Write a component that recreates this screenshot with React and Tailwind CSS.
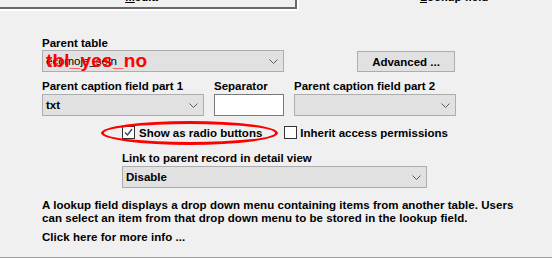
import React from 'react';

const font = { fontFamily: '"Liberation Sans", Arial, sans-serif' };

function Chevron() {
  return (
    <svg width="9" height="5" viewBox="0 0 9 5" className="shrink-0">
      <path d="M0.5 0.5 L4.5 4.5 L8.5 0.5" fill="none" stroke="#5a5a5a" strokeWidth="1" />
    </svg>
  );
}

function Select({ value, className = '' }) {
  return (
    <div className={`h-[22px] bg-[#e1e1e1] border border-[#adadad] flex items-center justify-between pl-[3px] pr-[5px] ${className}`}>
      <span>{value}</span>
      <Chevron />
    </div>
  );
}

function Checkbox({ checked }) {
  return (
    <div className="w-[13px] h-[13px] bg-white border border-[#333] flex items-center justify-center shrink-0">
      {checked && (
        <svg width="11" height="11" viewBox="0 0 11 11">
          <path d="M2 5.5 L4.5 8 L9 2" fill="none" stroke="#444" strokeWidth="1.4" />
        </svg>
      )}
    </div>
  );
}

export default function App() {
  return (
    <div className="w-[552px] h-[259px] bg-[#f0f0f0] text-black text-[11.5px] font-bold leading-[14px] overflow-hidden relative" style={font}>
      {/* tab strip */}
      <div className="flex h-[11px]">
        <div className="w-[299px] h-[11px] border-r-2 border-b-2 border-white">
          <div className="h-[9px] border-r-2 border-b-2 border-[#696969] flex justify-center overflow-hidden">
            <span className="-mt-[10px] ml-[-12px]"><span className="underline">M</span>edia</span>
          </div>
        </div>
        <div className="flex-1 pl-[121px] overflow-hidden">
          <span className="block -mt-[10px]"><span className="underline">L</span>ookup field</span>
        </div>
      </div>

      <div className="pl-[42px] pt-[25px]">
        {/* parent table */}
        <div>Parent table</div>
        <div className="flex items-start">
          <div className="relative">
            <Select value="ecomoje_sein" className="w-[242px] font-normal" />
            <span className="absolute left-[4px] top-[-1px] text-[#ff0000] text-[19px] leading-[24px] font-bold tracking-[0.2px]">tbl_yes_no</span>
          </div>
          <div className="ml-[73px] mt-[1px] w-[98px] h-[21px] bg-[#e1e1e1] border border-[#adadad] flex items-center justify-center">
            Advanced ...
          </div>
        </div>

        {/* caption fields */}
        <div className="flex mt-[7px]">
          <div className="w-[172px]">
            <div>Parent caption field part 1</div>
            <Select value="txt" className="w-[162px] mt-[1px]" />
          </div>
          <div className="w-[80px]">
            <div>Separator</div>
            <div className="w-[70px] h-[22px] bg-white border border-[#7a7a7a] mt-[1px]" />
          </div>
          <div>
            <div>Parent caption field part 2</div>
            <Select value="" className="w-[162px] mt-[1px]" />
          </div>
        </div>

        {/* checkboxes */}
        <div className="flex items-center mt-[9px] ml-[80px] h-[15px]">
          <div className="relative flex items-center">
            <div className="absolute left-[-21px] top-[-5px] w-[177px] h-[24px] rounded-[50%] border-[3px] border-[#ff0000]" />
            <Checkbox checked />
            <span className="ml-[4px]">Show as radio buttons</span>
          </div>
          <div className="flex items-center ml-[22px]">
            <Checkbox />
            <span className="ml-[3px]">Inherit access permissions</span>
          </div>
        </div>

        {/* link to parent */}
        <div className="ml-[80px] mt-[11px]">
          <div>Link to parent record in detail view</div>
          <Select value="Disable" className="w-[305px] mt-[1px]" />
        </div>

        {/* help text */}
        <div className="mt-[11px] leading-[13px] tracking-[0.05px]">
          <div>A lookup field displays a drop down menu containing items from another table. Users</div>
          <div>can select an item from that drop down menu to be stored in the lookup field.</div>
          <div className="mt-[6px]">Click here for more info ...</div>
        </div>
      </div>

      <div className="absolute left-0 right-0 bottom-0 h-[2px] border-t border-[#a0a0a0] bg-white" />
    </div>
  );
}
